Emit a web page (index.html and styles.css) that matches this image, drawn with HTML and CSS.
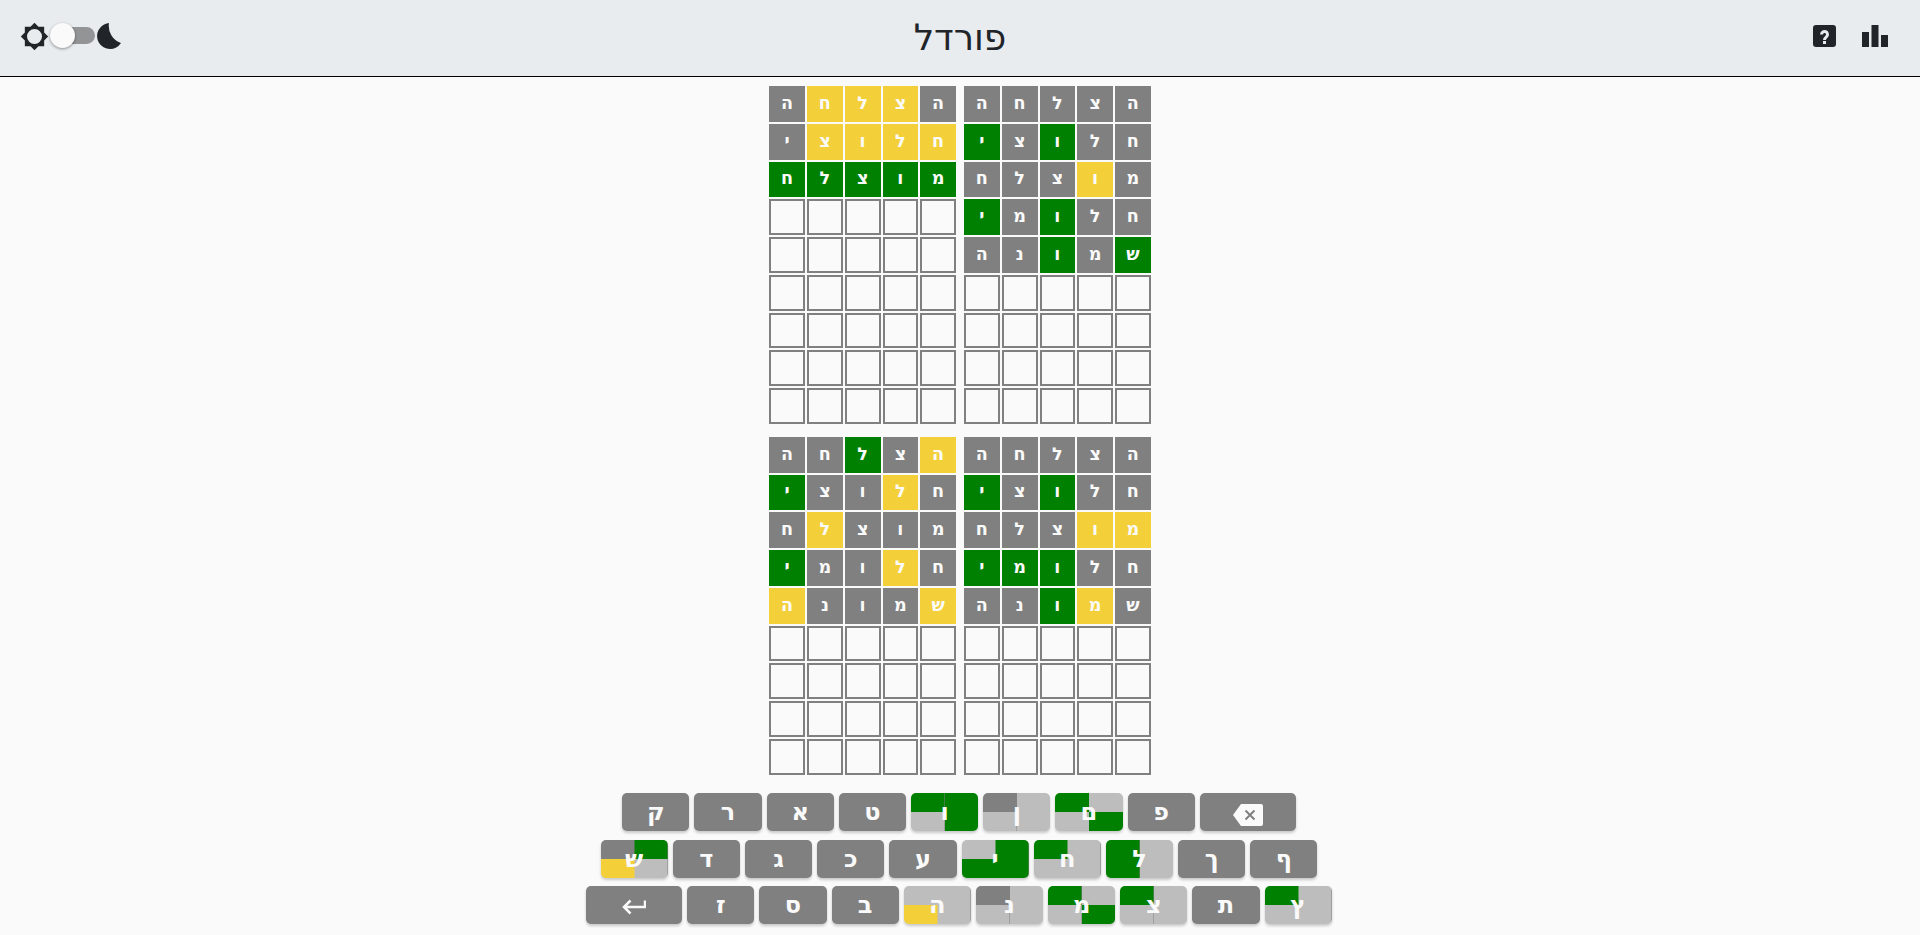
FILE: index.html
```html
<!DOCTYPE html>
<html lang="he">
<head>
<meta charset="utf-8">
<title>פורדל</title>
<link rel="stylesheet" href="styles.css">
</head>
<body>
<header class="topbar">
  <div class="theme-switch">
    <svg class="icon-sun" viewBox="0 0 24 24" width="29" height="29"><path fill-rule="evenodd" d="M20 8.690V4h-4.690L12 .69 8.690 4H4v4.690L.69 12 4 15.310V20h4.690L12 23.310 15.310 20H20v-4.690L23.310 12 20 8.690zM12 18.200a6.200 6.200 0 1 1 0-12.400 6.200 6.200 0 0 1 0 12.400z"/></svg>
    <span class="switch"><span class="switch-track"></span><span class="switch-thumb"></span></span>
    <svg class="icon-moon" viewBox="0 0 26 26" width="26" height="26"><path d="M12 0A13 13 0 1 0 24 20 18 18 0 0 1 12 0z"/></svg>
  </div>
  <h1 class="title" dir="rtl">פורדל</h1>
  <div class="actions">
    <svg class="icon-help" viewBox="0 0 23 22" width="23" height="22"><path d="M3 0h17a3 3 0 0 1 3 3v16a3 3 0 0 1-3 3H3a3 3 0 0 1-3-3V3a3 3 0 0 1 3-3z"/><path class="help-mark" d="M8.500 9.500a3 3 0 1 1 5 2.200c-1.200 1-2 1.600-2 3.300"/><rect class="help-dot" x="10" y="16" width="3" height="3"/></svg>
    <svg class="icon-stats" viewBox="0 0 26 22" width="26" height="22"><path d="M0 7h7v15H0zM9.500 0h7v22h-7zM19 10h7v12h-7z"/></svg>
  </div>
</header>
<main class="boards">
  <section class="board" dir="rtl">
    <div class="cell a">ה</div><div class="cell y">צ</div><div class="cell y">ל</div><div class="cell y">ח</div><div class="cell a">ה</div>
    <div class="cell y">ח</div><div class="cell y">ל</div><div class="cell y">ו</div><div class="cell y">צ</div><div class="cell a">י</div>
    <div class="cell g">מ</div><div class="cell g">ו</div><div class="cell g">צ</div><div class="cell g">ל</div><div class="cell g">ח</div>
    <div class="cell"></div><div class="cell"></div><div class="cell"></div><div class="cell"></div><div class="cell"></div>
    <div class="cell"></div><div class="cell"></div><div class="cell"></div><div class="cell"></div><div class="cell"></div>
    <div class="cell"></div><div class="cell"></div><div class="cell"></div><div class="cell"></div><div class="cell"></div>
    <div class="cell"></div><div class="cell"></div><div class="cell"></div><div class="cell"></div><div class="cell"></div>
    <div class="cell"></div><div class="cell"></div><div class="cell"></div><div class="cell"></div><div class="cell"></div>
    <div class="cell"></div><div class="cell"></div><div class="cell"></div><div class="cell"></div><div class="cell"></div>
  </section>
  <section class="board" dir="rtl">
    <div class="cell a">ה</div><div class="cell a">צ</div><div class="cell a">ל</div><div class="cell a">ח</div><div class="cell a">ה</div>
    <div class="cell a">ח</div><div class="cell a">ל</div><div class="cell g">ו</div><div class="cell a">צ</div><div class="cell g">י</div>
    <div class="cell a">מ</div><div class="cell y">ו</div><div class="cell a">צ</div><div class="cell a">ל</div><div class="cell a">ח</div>
    <div class="cell a">ח</div><div class="cell a">ל</div><div class="cell g">ו</div><div class="cell a">מ</div><div class="cell g">י</div>
    <div class="cell g">ש</div><div class="cell a">מ</div><div class="cell g">ו</div><div class="cell a">נ</div><div class="cell a">ה</div>
    <div class="cell"></div><div class="cell"></div><div class="cell"></div><div class="cell"></div><div class="cell"></div>
    <div class="cell"></div><div class="cell"></div><div class="cell"></div><div class="cell"></div><div class="cell"></div>
    <div class="cell"></div><div class="cell"></div><div class="cell"></div><div class="cell"></div><div class="cell"></div>
    <div class="cell"></div><div class="cell"></div><div class="cell"></div><div class="cell"></div><div class="cell"></div>
  </section>
  <section class="board" dir="rtl">
    <div class="cell y">ה</div><div class="cell a">צ</div><div class="cell g">ל</div><div class="cell a">ח</div><div class="cell a">ה</div>
    <div class="cell a">ח</div><div class="cell y">ל</div><div class="cell a">ו</div><div class="cell a">צ</div><div class="cell g">י</div>
    <div class="cell a">מ</div><div class="cell a">ו</div><div class="cell a">צ</div><div class="cell y">ל</div><div class="cell a">ח</div>
    <div class="cell a">ח</div><div class="cell y">ל</div><div class="cell a">ו</div><div class="cell a">מ</div><div class="cell g">י</div>
    <div class="cell y">ש</div><div class="cell a">מ</div><div class="cell a">ו</div><div class="cell a">נ</div><div class="cell y">ה</div>
    <div class="cell"></div><div class="cell"></div><div class="cell"></div><div class="cell"></div><div class="cell"></div>
    <div class="cell"></div><div class="cell"></div><div class="cell"></div><div class="cell"></div><div class="cell"></div>
    <div class="cell"></div><div class="cell"></div><div class="cell"></div><div class="cell"></div><div class="cell"></div>
    <div class="cell"></div><div class="cell"></div><div class="cell"></div><div class="cell"></div><div class="cell"></div>
  </section>
  <section class="board" dir="rtl">
    <div class="cell a">ה</div><div class="cell a">צ</div><div class="cell a">ל</div><div class="cell a">ח</div><div class="cell a">ה</div>
    <div class="cell a">ח</div><div class="cell a">ל</div><div class="cell g">ו</div><div class="cell a">צ</div><div class="cell g">י</div>
    <div class="cell y">מ</div><div class="cell y">ו</div><div class="cell a">צ</div><div class="cell a">ל</div><div class="cell a">ח</div>
    <div class="cell a">ח</div><div class="cell a">ל</div><div class="cell g">ו</div><div class="cell g">מ</div><div class="cell g">י</div>
    <div class="cell a">ש</div><div class="cell y">מ</div><div class="cell g">ו</div><div class="cell a">נ</div><div class="cell a">ה</div>
    <div class="cell"></div><div class="cell"></div><div class="cell"></div><div class="cell"></div><div class="cell"></div>
    <div class="cell"></div><div class="cell"></div><div class="cell"></div><div class="cell"></div><div class="cell"></div>
    <div class="cell"></div><div class="cell"></div><div class="cell"></div><div class="cell"></div><div class="cell"></div>
    <div class="cell"></div><div class="cell"></div><div class="cell"></div><div class="cell"></div><div class="cell"></div>
  </section>
</main>
<div class="keyboard">
  <div class="key-row">
    <div class="key">ק</div><div class="key">ר</div><div class="key">א</div><div class="key">ט</div>
    <div class="key q tl-g tr-g bl-n br-g">ו</div>
    <div class="key q tl-a tr-n bl-n br-n">ן</div>
    <div class="key q tl-g tr-n bl-n br-g">ם</div>
    <div class="key">פ</div>
    <div class="key wide"><svg class="key-icon" viewBox="0 0 30 22" width="30" height="22"><path class="bs-body" d="M8 0h20a2 2 0 0 1 2 2v18a2 2 0 0 1-2 2H8L0 11z"/><path class="bs-x" d="M12.500 6.500l9 9M21.500 6.500l-9 9"/></svg></div>
  </div>
  <div class="key-row">
    <div class="key q tl-a tr-g bl-y br-n">ש</div>
    <div class="key">ד</div><div class="key">ג</div><div class="key">כ</div><div class="key">ע</div>
    <div class="key q tl-n tr-g bl-g br-g">י</div>
    <div class="key q tl-g tr-n bl-n br-n">ח</div>
    <div class="key q tl-g tr-n bl-g br-n">ל</div>
    <div class="key">ך</div><div class="key">ף</div>
  </div>
  <div class="key-row">
    <div class="key wide"><svg class="key-icon" viewBox="0 0 24 18" width="24" height="18"><path class="enter" d="M23 1.500V8H2M8.500 1.500L2 8l6.500 6.500"/></svg></div>
    <div class="key">ז</div><div class="key">ס</div><div class="key">ב</div>
    <div class="key q tl-n tr-n bl-y br-n">ה</div>
    <div class="key q tl-a tr-n bl-n br-n">נ</div>
    <div class="key q tl-g tr-n bl-n br-g">מ</div>
    <div class="key q tl-g tr-n bl-n br-n">צ</div>
    <div class="key">ת</div>
    <div class="key q tl-g tr-n bl-n br-n">ץ</div>
  </div>
</div>
</body>
</html>
```
FILE: styles.css
```css
* { box-sizing: border-box; }
html, body { margin: 0; height: 100%; }
body {
  background: #fafafa;
  color: #212529;
  font-family: "DejaVu Sans", "Liberation Sans", sans-serif;
  overflow: hidden;
}
.topbar {
  height: 77px;
  background: #e9ecef;
  border-bottom: 1px solid #000;
  display: grid;
  grid-template-columns: 1fr auto 1fr;
  align-items: center;
  padding: 0 20px 4px;
}
.title {
  margin: 3px 0 0;
  font-size: 36px;
  font-weight: 400;
  line-height: 1;
  color: #212529;
}
.theme-switch { display: flex; align-items: center; }
.icon-sun, .icon-moon, .icon-help, .icon-stats { fill: #212529; display: block; }
.switch { position: relative; width: 48px; height: 26px; display: block; }
.switch-track {
  position: absolute;
  left: 8px;
  top: 4px;
  width: 38px;
  height: 17px;
  border-radius: 9px;
  background: #939496;
}
.switch-thumb {
  position: absolute;
  left: 1px;
  top: 0;
  width: 25px;
  height: 25px;
  border-radius: 50%;
  background: #fafafa;
  box-shadow: 0 1px 3px rgba(0,0,0,.4);
}
.actions { display: flex; justify-content: flex-end; gap: 26px; padding-right: 12px; }
.help-mark { fill: none; stroke: #e9ecef; stroke-width: 3; }
.help-dot { fill: #e9ecef; }
.boards {
  display: grid;
  grid-template-columns: repeat(2, 186.750px);
  justify-content: center;
  column-gap: 8px;
  row-gap: 13px;
  margin-top: 9px;
}
.board {
  display: grid;
  grid-template-columns: repeat(5, 35.750px);
  grid-auto-rows: 35.750px;
  gap: 2px;
}
.cell {
  display: flex;
  align-items: center;
  justify-content: center;
  border: 2px solid #808080;
  padding-bottom: 2px;
  font-size: 17.600px;
  font-weight: 700;
  color: #fafafa;
}
.cell.a { background: #808080; border-color: #808080; }
.cell.y { background: #f3d03a; border-color: #f3d03a; }
.cell.g { background: #008000; border-color: #008000; }
.keyboard {
  display: flex;
  flex-direction: column;
  gap: 8.500px;
  margin-top: 18.500px;
  padding-right: 2px;
}
.key-row { display: flex; justify-content: center; gap: 5px; }
.key {
  width: 67.200px;
  height: 38px;
  border-radius: 5px;
  background-color: #808080;
  color: #fafafa;
  font-size: 24px;
  font-weight: 700;
  box-shadow: 0 2px 3px rgba(0,0,0,.2);
  display: flex;
  align-items: center;
  justify-content: center;
}
.key.wide { width: 96px; }
.key.q {
  background-image:
    linear-gradient(var(--tl), var(--tl)),
    linear-gradient(var(--tr), var(--tr)),
    linear-gradient(var(--bl), var(--bl)),
    linear-gradient(var(--br), var(--br));
  background-size: 50% 50%;
  background-position: 0 0, 100% 0, 0 100%, 100% 100%;
  background-repeat: no-repeat;
}
.tl-g { --tl: #008000; } .tr-g { --tr: #008000; } .bl-g { --bl: #008000; } .br-g { --br: #008000; }
.tl-a { --tl: #808080; }
.tl-n { --tl: #bdbdbd; } .tr-n { --tr: #bdbdbd; } .bl-n { --bl: #bdbdbd; } .br-n { --br: #bdbdbd; }
.bl-y { --bl: #f3d03a; }
.key-icon { margin-top: 6px; }
.bs-body { fill: #fafafa; }
.bs-x { fill: none; stroke: #808080; stroke-width: 2; }
.enter { fill: none; stroke: #fafafa; stroke-width: 2.500; }
```
